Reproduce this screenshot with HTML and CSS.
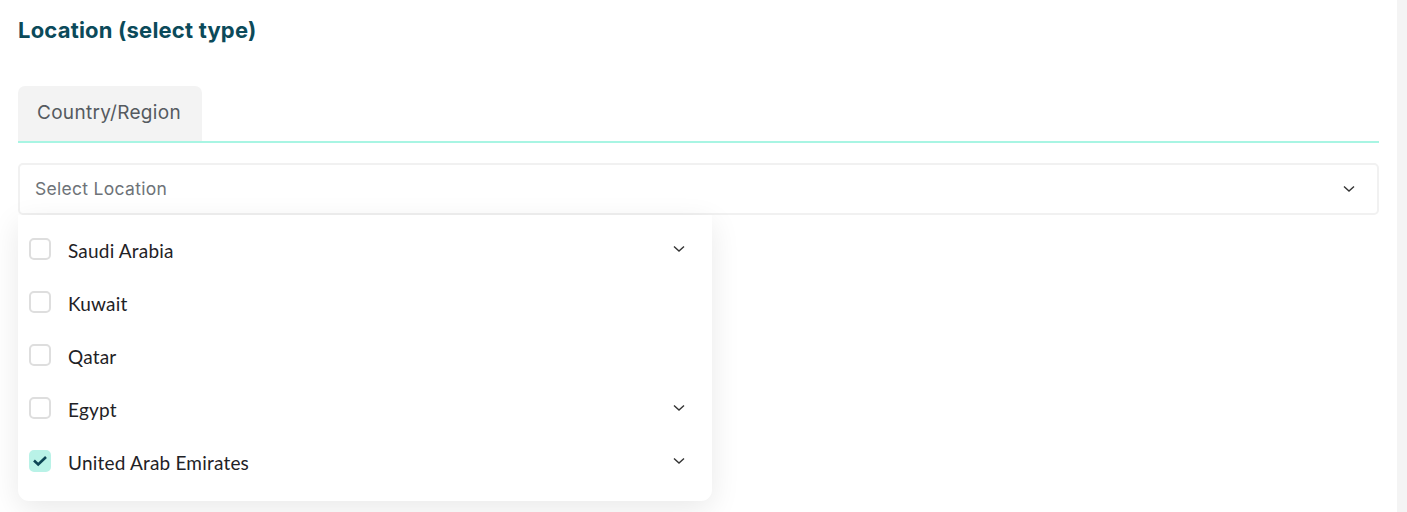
FILE: index.html
```html
<!DOCTYPE html>
<html>
<head>
<meta charset="utf-8">
<link rel="stylesheet" href="styles.css">
</head>
<body>
<div class="page">
  <main class="main">
    <h2 class="title">Location (select type)</h2>
    <div class="tabs">
      <div class="tab">Country/Region</div>
    </div>
    <div class="select-wrap">
      <div class="select">
        <span class="placeholder">Select Location</span>
        <svg class="chev" width="12" height="8" viewBox="0 0 12 8"><path d="M1 1.5 L6 6 L11 1.5" fill="none" stroke="#333" stroke-width="1.4"/></svg>
      </div>
      <div class="menu">
        <div class="item"><span class="box"></span><span class="label">Saudi Arabia</span><svg class="chev" width="12" height="8" viewBox="0 0 12 8"><path d="M1 1.5 L6 6 L11 1.5" fill="none" stroke="#333" stroke-width="1.4"/></svg></div>
        <div class="item"><span class="box"></span><span class="label">Kuwait</span></div>
        <div class="item"><span class="box"></span><span class="label">Qatar</span></div>
        <div class="item"><span class="box"></span><span class="label">Egypt</span><svg class="chev" width="12" height="8" viewBox="0 0 12 8"><path d="M1 1.5 L6 6 L11 1.5" fill="none" stroke="#333" stroke-width="1.4"/></svg></div>
        <div class="item"><span class="box checked"><svg width="16" height="12" viewBox="0 0 16 12"><path d="M2 5.5 L6.2 9.5 L14 2" fill="none" stroke="#0d4555" stroke-width="2.6"/></svg></span><span class="label">United Arab Emirates</span><svg class="chev" width="12" height="8" viewBox="0 0 12 8"><path d="M1 1.5 L6 6 L11 1.5" fill="none" stroke="#333" stroke-width="1.4"/></svg></div>
      </div>
    </div>
  </main>
  <aside class="rail"></aside>
</div>
</body>
</html>
```
FILE: styles.css
```css
* { box-sizing: border-box; }
html, body { margin: 0; padding: 0; background: #fff; }
body { font-family: "Lato", "Noto Sans", sans-serif; }
.page { display: flex; width: 1407px; height: 512px; overflow: hidden; }
.main { flex: 1; padding: 15px 18px 0 18px; }
.rail { width: 10px; background: #f4f4f4; }
.title {
  margin: 0;
  font-family: "Inter", sans-serif;
  font-weight: 700;
  font-size: 22px;
  line-height: 30px;
  color: #0b4a5a;
  letter-spacing: 0.2px;
}
.tabs {
  margin-top: 41px;
  display: flex;
  border-bottom: 2px solid #a8f5e3;
}
.tab {
  width: 184px;
  height: 55px;
  background: #f3f3f3;
  border-radius: 7px 7px 0 0;
  padding-left: 19px;
  padding-bottom: 3px;
  display: flex;
  align-items: center;
  font-family: "Inter", sans-serif;
  font-size: 19px;
  letter-spacing: 0.3px;
  color: #555a5f;
}
.select-wrap { position: relative; margin-top: 20px; }
.select {
  height: 52px;
  border: 2px solid #f1f1f1;
  border-radius: 5px;
  display: flex;
  align-items: center;
  padding: 0 22px 0 15px;
  justify-content: space-between;
}
.placeholder { font-family: "Inter", sans-serif; font-size: 17.5px; letter-spacing: 0.3px; color: #6e7378; padding-bottom: 1px; }
.menu {
  position: absolute;
  left: 0;
  top: 52px;
  width: 694px;
  background: #fff;
  border-radius: 0 0 11px 11px;
  box-shadow: 0 8px 30px rgba(0,0,0,0.09);
  padding: 9px 0 12px 0;
  z-index: 2;
}
.item {
  height: 53px;
  display: flex;
  align-items: center;
  padding: 0 27px 0 11px;
}
.item .chev { margin-left: auto; margin-top: -4px; }
.box {
  width: 22px;
  height: 22px;
  border: 2px solid #dedede;
  border-radius: 5px;
  display: flex;
  align-items: center;
  justify-content: center;
  margin-top: -3px;
}
.box.checked { background: #b9f2e7; border-color: #b9f2e7; }
.label { margin-left: 17px; font-size: 19px; letter-spacing: 0.2px; color: #1f2226; }
```
